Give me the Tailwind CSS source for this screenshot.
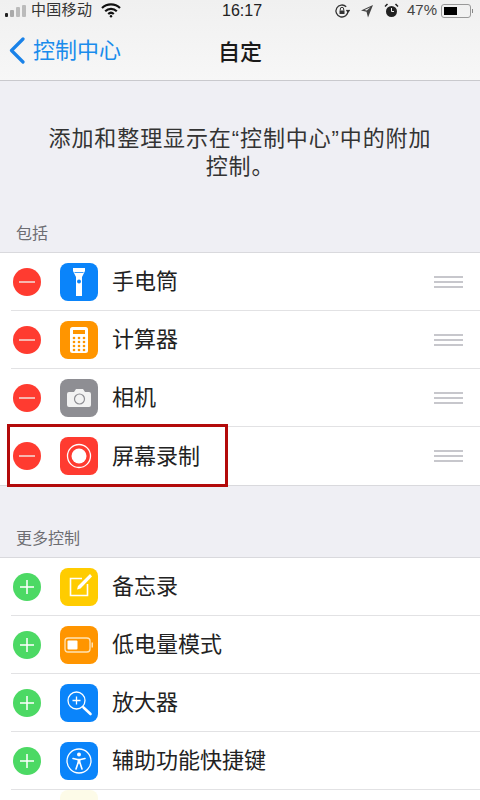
<!DOCTYPE html>
<html lang="zh">
<head>
    <meta charset="UTF-8">
    <meta name="viewport" content="width=device-width, initial-scale=1.0">
    <title>自定</title>
    <script src="https://cdn.jsdelivr.net/npm/@tailwindcss/browser@4"></script>
</head>
<body class="bg-[#efeff4] text-[#222] font-['Liberation_Sans','Noto_Sans_CJK_SC',sans-serif]">
<div class="relative w-[480px] h-[800px] overflow-hidden">

    <!-- status bar + nav -->
    <div class="h-[81px] bg-gradient-to-b from-[#f0f0f0] to-[#f7f7f7] border-b border-[#c9c9cd]">
        <div class="relative h-[21px] flex items-center justify-between pl-[5px] pr-[7px] text-[15px] text-[#333]">
            <div class="flex items-center">
                <div class="flex items-end gap-[2px] mr-[5px]">
                    <span class="w-[3px] h-[4px] bg-[#222] rounded-[1px]"></span>
                    <span class="w-[4px] h-[7px] bg-[#aaa] rounded-[1px]"></span>
                    <span class="w-[4px] h-[10px] bg-[#bbb] rounded-[1px]"></span>
                    <span class="w-[4px] h-[12px] bg-[#bbb] rounded-[1px]"></span>
                </div>
                <span class="text-[15px] tracking-[0.3px]">中国移动</span>
                <svg class="ml-[9px]" width="20" height="15" viewBox="0 0 20 15" fill="none" stroke="#111" stroke-width="2.2">
                    <path d="M1 5a13 13 0 0 1 18 0"/>
                    <path d="M4.2 8.2a8.5 8.5 0 0 1 11.6 0"/>
                    <path d="M7.2 11a4.200 4.200 0 0 1 5.600 0"/>
                    <circle cx="10" cy="13.300" r="1.200" fill="#111" stroke="none"/>
                </svg>
            </div>
            <span class="absolute left-[222px] top-0 text-[16px] leading-[21px] font-medium text-[#222]">16:17</span>
            <div class="flex items-center">
                <svg width="16" height="16" viewBox="0 0 16 16" fill="none" stroke="#333" stroke-width="1.300">
                    <path d="M14 8a6 6 0 1 1-1.800-4.300"/>
                    <path d="M15.500 7l-1.500 2-1.500-2" fill="#333"/>
                    <rect x="5.500" y="7.500" width="5" height="3.500" fill="#333" stroke="none"/>
                    <path d="M6.300 7.500V6a1.700 1.700 0 0 1 3.400 0v1.500" stroke-width="1"/>
                </svg>
                <svg class="ml-[10px]" width="14" height="14" viewBox="0 0 14 14" fill="#444">
                    <path d="M13 1L1 6.500l5.500 1.200L8 13.500z M10.500 3.200L6.800 6.600 4.500 6.100z" fill-rule="evenodd"/>
                </svg>
                <svg class="ml-[10px]" width="15" height="15" viewBox="0 0 15 15">
                    <circle cx="7.500" cy="8.500" r="5.500" fill="#222"/>
                    <path d="M7.500 5v3.500h2.500" stroke="#eee" stroke-width="1" fill="none"/>
                    <path d="M1 3.500L3.500 1M14 3.500L11.500 1" stroke="#222" stroke-width="1.500"/>
                </svg>
                <span class="ml-[8px] text-[15px] text-[#444]">47%</span>
                <div class="ml-[4px] w-[30px] h-[14px] border border-[#999] rounded-[3px] p-[2px]">
                    <div class="w-[13px] h-full bg-black"></div>
                </div>
                <span class="w-[1px] h-[4px] ml-[1px] bg-[#888]"></span>
            </div>
        </div>
        <div class="relative h-[59px] flex items-center justify-center">
            <div class="absolute left-[9px] top-[16px] flex items-center text-[#1a8cec]">
                <svg width="16" height="27" viewBox="0 0 16 27" fill="none" stroke="#1a82e8" stroke-width="3.200" stroke-linecap="round" stroke-linejoin="round">
                    <path d="M14 2L2.500 13.500 14 25"/>
                </svg>
                <span class="ml-[8px] text-[22px] leading-[27px]">控制中心</span>
            </div>
            <span class="text-[22px] font-medium text-[#1a1a1a] mt-[4px]">自定</span>
        </div>
    </div>

    <p class="px-[46px] pt-[44px] text-center text-[22px] leading-[28px] tracking-[0.9px] text-[#333]">添加和整理显示在“控制中心”中的附加控制。</p>

    <!-- 包括 -->
    <div class="mt-[42px] h-[29px] pl-[16px] text-[16px] leading-[22px] text-[#6d6d72]">包括</div>
    <div class="bg-white border-y border-[#d9d9dd]">
        <div class="flex items-center h-[58px] ml-[11px] border-b border-[#e2e2e4]">
            <div class="w-[28px] h-[28px] ml-[2px] rounded-full bg-[#ff3b30] flex items-center justify-center"><span class="w-[16px] h-[2px] bg-[#f7b5ae]"></span></div>
            <div class="w-[38px] h-[38px] ml-[19px] rounded-[8px] bg-[#0a84fa] flex items-center justify-center">
                <svg width="38" height="38" viewBox="0 0 38 38" fill="#fff">
                    <path d="M13 5h12v3l-3 6v19h-6V14l-3-6z"/>
                    <path d="M14.500 9.500h9" stroke="#0a84fa" stroke-width="0.800"/>
                    <circle cx="19" cy="18.500" r="2" fill="#0a84fa"/>
                </svg>
            </div>
            <span class="ml-[14px] text-[22px]">手电筒</span>
            <div class="ml-auto mr-[17px] w-[29px] flex flex-col gap-[3px]"><span class="h-[2px] bg-[#c7c7cc]"></span><span class="h-[2px] bg-[#c7c7cc]"></span><span class="h-[2px] bg-[#c7c7cc]"></span></div>
        </div>
        <div class="flex items-center h-[58px] ml-[11px] border-b border-[#e2e2e4]">
            <div class="w-[28px] h-[28px] ml-[2px] rounded-full bg-[#ff3b30] flex items-center justify-center"><span class="w-[16px] h-[2px] bg-[#f7b5ae]"></span></div>
            <div class="w-[38px] h-[38px] ml-[19px] rounded-[8px] bg-[#ff9500] flex items-center justify-center">
                <svg width="38" height="38" viewBox="0 0 38 38">
                    <rect x="10" y="6" width="18" height="26" rx="2.500" fill="#fff"/>
                    <rect x="13" y="9" width="12" height="4" fill="#ff9500"/>
                    <g fill="#ff9500">
                        <circle cx="14" cy="17" r="1.300"/><circle cx="19" cy="17" r="1.300"/><circle cx="24" cy="17" r="1.300"/>
                        <circle cx="14" cy="21" r="1.300"/><circle cx="19" cy="21" r="1.300"/><circle cx="24" cy="21" r="1.300"/>
                        <circle cx="14" cy="25" r="1.300"/><circle cx="19" cy="25" r="1.300"/><circle cx="24" cy="25" r="1.300"/>
                        <circle cx="14" cy="29" r="1.300"/><circle cx="19" cy="29" r="1.300"/><circle cx="24" cy="29" r="1.300"/>
                    </g>
                </svg>
            </div>
            <span class="ml-[14px] text-[22px]">计算器</span>
            <div class="ml-auto mr-[17px] w-[29px] flex flex-col gap-[3px]"><span class="h-[2px] bg-[#c7c7cc]"></span><span class="h-[2px] bg-[#c7c7cc]"></span><span class="h-[2px] bg-[#c7c7cc]"></span></div>
        </div>
        <div class="flex items-center h-[58px] ml-[11px] border-b border-[#e2e2e4]">
            <div class="w-[28px] h-[28px] ml-[2px] rounded-full bg-[#ff3b30] flex items-center justify-center"><span class="w-[16px] h-[2px] bg-[#f7b5ae]"></span></div>
            <div class="w-[38px] h-[38px] ml-[19px] rounded-[8px] bg-[#8e8e93] flex items-center justify-center">
                <svg width="38" height="38" viewBox="0 0 38 38">
                    <path d="M9 13h5l2-3h7l2 3h4a2 2 0 0 1 2 2v11a2 2 0 0 1-2 2H9a2 2 0 0 1-2-2V15a2 2 0 0 1 2-2z" fill="#f2f2f2"/>
                    <circle cx="19.500" cy="20" r="5" fill="none" stroke="#8e8e93" stroke-width="1.200"/>
                </svg>
            </div>
            <span class="ml-[14px] text-[22px]">相机</span>
            <div class="ml-auto mr-[17px] w-[29px] flex flex-col gap-[3px]"><span class="h-[2px] bg-[#c7c7cc]"></span><span class="h-[2px] bg-[#c7c7cc]"></span><span class="h-[2px] bg-[#c7c7cc]"></span></div>
        </div>
        <div class="flex items-center h-[58px] ml-[11px]">
            <div class="w-[28px] h-[28px] ml-[2px] rounded-full bg-[#ff3b30] flex items-center justify-center"><span class="w-[16px] h-[2px] bg-[#f7b5ae]"></span></div>
            <div class="w-[38px] h-[38px] ml-[19px] rounded-[8px] bg-[#ff3b30] flex items-center justify-center">
                <svg width="38" height="38" viewBox="0 0 38 38">
                    <circle cx="19" cy="19" r="11.500" fill="none" stroke="#fff" stroke-width="1.300"/>
                    <circle cx="19" cy="19" r="7.500" fill="#fff"/>
                </svg>
            </div>
            <span class="ml-[14px] text-[22px]">屏幕录制</span>
            <div class="ml-auto mr-[17px] w-[29px] flex flex-col gap-[3px]"><span class="h-[2px] bg-[#c7c7cc]"></span><span class="h-[2px] bg-[#c7c7cc]"></span><span class="h-[2px] bg-[#c7c7cc]"></span></div>
        </div>
    </div>

    <!-- 更多控制 -->
    <div class="mt-[42px] h-[29px] pl-[16px] text-[16px] leading-[22px] text-[#6d6d72]">更多控制</div>
    <div class="bg-white border-y border-[#d9d9dd]">
        <div class="flex items-center h-[58px] ml-[11px] border-b border-[#e2e2e4]">
            <div class="w-[28px] h-[28px] ml-[2px] rounded-full bg-[#4cd964] flex items-center justify-center text-white"><svg width="16" height="16" viewBox="0 0 16 16" stroke="#fff" stroke-width="1.500"><path d="M1 8h14M8 1v14"/></svg></div>
            <div class="w-[38px] h-[38px] ml-[19px] rounded-[8px] bg-[#ffcc00] flex items-center justify-center">
                <svg width="38" height="38" viewBox="0 0 38 38" fill="none">
                    <path d="M22 10.500H10.500v17h17V16" stroke="#fff" stroke-width="1.600"/>
                    <path d="M17 21.500l1-3.500L30 6l2 2.500L20.500 20.500z" fill="#fff"/>
                </svg>
            </div>
            <span class="ml-[14px] text-[22px]">备忘录</span>
        </div>
        <div class="flex items-center h-[58px] ml-[11px] border-b border-[#e2e2e4]">
            <div class="w-[28px] h-[28px] ml-[2px] rounded-full bg-[#4cd964] flex items-center justify-center text-white"><svg width="16" height="16" viewBox="0 0 16 16" stroke="#fff" stroke-width="1.500"><path d="M1 8h14M8 1v14"/></svg></div>
            <div class="w-[38px] h-[38px] ml-[19px] rounded-[8px] bg-[#ff9500] flex items-center justify-center">
                <svg width="38" height="38" viewBox="0 0 38 38" fill="none">
                    <rect x="5" y="12" width="25" height="14" rx="3" stroke="#ffe3b5" stroke-width="1.300"/>
                    <rect x="7.500" y="14.500" width="10" height="9" rx="1" fill="#fff"/>
                    <rect x="31.500" y="16.500" width="1.500" height="5" fill="#ffe3b5"/>
                </svg>
            </div>
            <span class="ml-[14px] text-[22px]">低电量模式</span>
        </div>
        <div class="flex items-center h-[58px] ml-[11px] border-b border-[#e2e2e4]">
            <div class="w-[28px] h-[28px] ml-[2px] rounded-full bg-[#4cd964] flex items-center justify-center text-white"><svg width="16" height="16" viewBox="0 0 16 16" stroke="#fff" stroke-width="1.500"><path d="M1 8h14M8 1v14"/></svg></div>
            <div class="w-[38px] h-[38px] ml-[19px] rounded-[8px] bg-[#0a84fa] flex items-center justify-center">
                <svg width="38" height="38" viewBox="0 0 38 38" fill="none" stroke="#fff">
                    <circle cx="16.500" cy="16.500" r="8.500" stroke-width="1.300"/>
                    <path d="M12.500 16.500h8M16.500 12.500v8" stroke-width="1.300"/>
                    <path d="M23.500 23.500l7 6.500" stroke-width="2.600" stroke-linecap="round"/>
                </svg>
            </div>
            <span class="ml-[14px] text-[22px]">放大器</span>
        </div>
        <div class="flex items-center h-[58px] ml-[11px] border-b border-[#e2e2e4]">
            <div class="w-[28px] h-[28px] ml-[2px] rounded-full bg-[#4cd964] flex items-center justify-center text-white"><svg width="16" height="16" viewBox="0 0 16 16" stroke="#fff" stroke-width="1.500"><path d="M1 8h14M8 1v14"/></svg></div>
            <div class="w-[38px] h-[38px] ml-[19px] rounded-[8px] bg-[#0a84fa] flex items-center justify-center">
                <svg width="38" height="38" viewBox="0 0 38 38" fill="none" stroke="#fff">
                    <circle cx="19" cy="19" r="12" stroke-width="1.300"/>
                    <circle cx="19" cy="12.500" r="2" fill="#fff" stroke="none"/>
                    <path d="M13 16.500l4.500 1h3l4.500-1" stroke-width="1.600" stroke-linecap="round" stroke-linejoin="round"/>
                    <path d="M19 17.500v4" stroke-width="3"/>
                    <path d="M18 21l-2 6M20 21l2 6" stroke-width="1.600" stroke-linecap="round"/>
                </svg>
            </div>
            <span class="ml-[14px] text-[22px]">辅助功能快捷键</span>
        </div>
        <div class="h-[20px] ml-[60px]"><div class="w-[38px] h-[20px] rounded-t-[8px] bg-[#fdfbe8]"></div></div>
    </div>

    <!-- red highlight drawn over the screenshot -->
    <div class="absolute left-[7px] top-[424px] w-[221px] h-[63px] border-[3px] border-[#b30a0a]"></div>
</div>
</body>
</html>
